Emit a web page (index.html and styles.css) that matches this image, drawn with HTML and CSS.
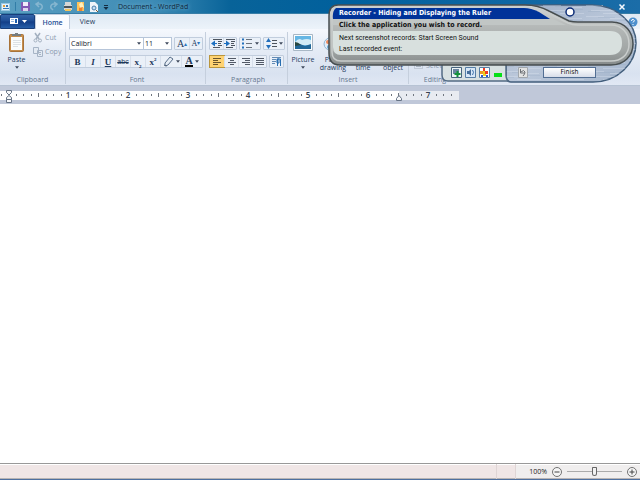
FILE: index.html
```html
<!DOCTYPE html>
<html lang="en">
<head>
<meta charset="utf-8">
<title>Document - WordPad</title>
<link rel="stylesheet" href="styles.css">
</head>
<body>
<svg class="defs" aria-hidden="true">
  <symbol id="arrow" viewBox="0 0 5 3"><path d="M0 0h5L2.500 3z" fill="#3f4a5c"/></symbol>
  <symbol id="outdent" viewBox="0 0 12 12"><path d="M2 1.500h9M7 3.500h4M7 5.500h3M7 7.500h4M2 9.500h7" stroke="#4d5560"/><path d="M4 2.500v6L0 5.500z" fill="#1c6fc0"/><path d="M3 5.500h3" stroke="#1c6fc0"/></symbol>
  <symbol id="indent" viewBox="0 0 12 12"><path d="M2 1.500h9M7 3.500h4M7 5.500h3M7 7.500h4M2 9.500h7" stroke="#4d5560"/><path d="M2 2.500v6l4-3z" fill="#1c6fc0"/><path d="M0 5.500h3" stroke="#1c6fc0"/></symbol>
</svg>

<header class="titlebar">
  <svg class="quick" width="112" height="14" viewBox="0 0 112 14" aria-hidden="true">
    <rect x="1.500" y="3.500" width="8" height="7" fill="#e6f2fa" stroke="#9bc8e2"/><path d="M3 5h2v2H3z" fill="#e0a040"/><path d="M6 5h2v2H6z" fill="#3478b8"/><path d="M3 8.500h6" stroke="#3478b8"/>
    <path d="M15.500 2v9" stroke="#327da7"/>
    <rect x="21" y="2" width="9" height="9" rx="1" fill="#8158b4"/><path d="M23 2h5v4h-5z" fill="#f1eafa"/><path d="M23 8h5v3h-5z" fill="#ddd4ed"/>
    <path d="M37 4h3q3 1 2 4l-2 2M39 2l-3 2 3 3" fill="none" stroke="#86b6d0" stroke-width="1.500"/>
    <path d="M56 4h-3q-3 1-2 4l2 2M54 2l3 2-3 3" fill="none" stroke="#86b6d0" stroke-width="1.500"/>
    <path d="M65 2h6v3h-6zM64 5h8v5h-8z" fill="#d5d6d5"/><path d="M64 6h8v2h-8z" fill="#4b555b"/><path d="M65 9h6v2h-6z" fill="#f5c65b"/>
    <path d="M77 2h7v9h-7z" fill="#ffc258"/><path d="M79 4l3-2 2 5-3 4" fill="#fff0bc"/><path d="M79 8l4-1-1 4h-3z" fill="#ef822d"/>
    <path d="M90 2h5l3 3v7h-8z" fill="#f0f5fa"/><circle cx="94" cy="8" r="2" fill="#c7e1f5" stroke="#4c7fab"/><path d="M96 10l2 2" stroke="#775832"/>
    <path d="M104 5.500h4" stroke="#142c42"/><path d="M103.500 7h5l-2.500 3z" fill="#142c42"/>
  </svg>
  <h1>Document - WordPad</h1>
  <div class="window-controls">
    <button type="button" aria-label="Minimize"><svg width="8" height="8"><path d="M1 3h6" stroke="#e5f3fc" stroke-width="2"/></svg></button>
    <button type="button" aria-label="Close"><svg width="8" height="8"><path d="M1.500 1.500l5 5m0-5l-5 5" stroke="#f4f9ff" stroke-width="1.500"/></svg></button>
  </div>
</header>

<nav class="tabs">
  <button class="app-menu" type="button" aria-label="WordPad menu"><svg width="22" height="9"><path d="M3 1h8v6H3z" fill="#fff"/><path d="M4 2.500h3M4 4.500h3" stroke="#91b4df"/><path d="M8 2h2v4H8z" fill="#1e5eae"/><path d="M15 3h5l-2.500 3z" fill="#fff"/></svg></button>
  <a class="tab active" href="#home">Home</a>
  <a class="tab" href="#view">View</a>
  <button class="help" type="button" aria-label="Help"><svg width="10" height="10"><circle cx="5" cy="5" r="4.500" fill="#4d90ce"/><path d="M3.500 4q0-2 2-1.500 2 1-.5 3M5 7v1" fill="none" stroke="#fff"/></svg></button>
</nav>

<main>
<section class="ribbon" id="home" aria-label="Home ribbon">
  <section class="group clipboard">
    <div class="tools">
      <button class="large" type="button"><svg width="18" height="22" viewBox="0 0 18 22"><rect x="1.500" y="2.500" width="14" height="17" rx="1" fill="#c58d4d" stroke="#a87339"/><path d="M3 5h11v13H3z" fill="#fafcfc"/><path d="M5 8.500h8M5 10.500h8M5 12.500h8M5 14.500h5" stroke="#dce1e5"/><path d="M4 4V2h3V1h3v1h3v2z" fill="#767d80"/></svg><span>Paste</span><svg class="arrow"><use href="#arrow"/></svg></button>
      <div class="stack">
        <button type="button" disabled><svg width="10" height="11"><path d="M2 1l4 6M7 1L3 7" stroke="#a3b0c0" stroke-width="1.500"/><circle cx="2.500" cy="8.500" r="1.500" fill="none" stroke="#a3b0c0"/><circle cx="7" cy="8.500" r="1.500" fill="none" stroke="#a3b0c0"/></svg>Cut</button>
        <button type="button" disabled><svg width="10" height="11"><path d="M.5 1.500h5v6h-5zM4.500 4.500h5v6h-5z" fill="#e3eaf3" stroke="#a6b4c6"/><path d="M6 6.500h2M6 8.500h2" stroke="#a6b4c6"/></svg>Copy</button>
      </div>
    </div>
    <h2>Clipboard</h2>
  </section>
  <section class="group font">
    <div class="rows">
      <div class="row">
        <div class="combos">
          <label class="combo family"><select aria-label="Font family"><option>Calibri</option></select><svg class="arrow"><use href="#arrow"/></svg></label>
          <label class="combo size"><select aria-label="Font size"><option>11</option></select><svg class="arrow"><use href="#arrow"/></svg></label>
        </div>
        <div class="strip"><button type="button" class="wide-letter">A<sup>▴</sup></button><button type="button" class="small-letter">A<sup>▾</sup></button></div>
      </div>
      <div class="row">
        <div class="strip format">
          <button type="button"><b>B</b></button><button type="button"><i>I</i></button><button type="button"><u>U</u></button><button type="button" class="strike"><s>abc</s></button><button type="button"><span>x<sub>2</sub></span></button><button type="button"><span>x<sup>2</sup></span></button>
          <button type="button" class="dual" aria-label="Highlight"><svg width="11" height="11"><path d="M2 7l5-6 3 2-5 6-3 1z" fill="#e6edf5" stroke="#596e89"/><path d="M1 9l3 1" stroke="#56677d"/></svg><svg class="arrow"><use href="#arrow"/></svg></button>
          <button type="button" class="dual color"><b>A</b><svg class="arrow"><use href="#arrow"/></svg></button>
        </div>
      </div>
    </div>
    <h2>Font</h2>
  </section>
  <section class="group paragraph">
    <div class="rows">
      <div class="row">
        <div class="strip"><button type="button" aria-label="Decrease indent"><svg width="12" height="12"><use href="#outdent"/></svg></button><button type="button" aria-label="Increase indent"><svg width="12" height="12"><use href="#indent"/></svg></button></div>
        <div class="strip"><button class="dual" type="button" aria-label="List"><svg width="11" height="11"><path d="M4 1.500h6M4 5.500h6M4 9.500h6" stroke="#68727e"/><path d="M0 1.500h2M0 5.500h2M0 9.500h2" stroke="#2371bd" stroke-width="2"/></svg><svg class="arrow"><use href="#arrow"/></svg></button></div>
        <div class="strip"><button class="dual" type="button" aria-label="Line spacing"><svg width="11" height="12"><path d="M6 2.500h5M6 5.500h5M6 8.500h5" stroke="#4b535d"/><path d="M2.500 0l2.500 4H0zM2.500 11L0 7h5z" fill="#246fbc"/></svg><svg class="arrow"><use href="#arrow"/></svg></button></div>
      </div>
      <div class="row">
        <div class="strip align">
          <button class="selected" type="button" aria-label="Align left"><svg width="10" height="10"><path d="M1 1.500h8M1 3.500h5M1 5.500h8M1 7.500h5" stroke="#69552d"/></svg></button>
          <button type="button" aria-label="Center"><svg width="10" height="10"><path d="M1 1.500h8M3 3.500h4M1 5.500h8M3 7.500h4" stroke="#515966"/></svg></button>
          <button type="button" aria-label="Align right"><svg width="10" height="10"><path d="M1 1.500h8M4 3.500h5M1 5.500h8M4 7.500h5" stroke="#515966"/></svg></button>
          <button type="button" aria-label="Justify"><svg width="10" height="10"><path d="M1 1.500h8M1 3.500h8M1 5.500h8M1 7.500h8" stroke="#515966"/></svg></button>
        </div>
        <div class="strip"><button type="button" aria-label="Paragraph"><svg width="12" height="11"><path d="M1 1.500h9M1 3.500h4M1 5.500h4M1 7.500h3" stroke="#638bb5"/><path d="M6.500 10V3h3v7M6 3h2v4H6z" fill="none" stroke="#286eb0"/></svg></button></div>
      </div>
    </div>
    <h2>Paragraph</h2>
  </section>
  <section class="group insert">
    <div class="tools">
      <button class="large" type="button"><svg width="20" height="22" viewBox="0 0 20 22"><path d="M.5 2.500h19v16H.5z" fill="#fbfdfe" stroke="#a8b7c5"/><path d="M2 4h16v13H2z" fill="#66b6e4"/><path d="M2 10q4-5 7-2 5-2 9 0v5H2z" fill="#d2ebf6"/><path d="M2 11l5 1 5 2 6-2v5H2z" fill="#216798"/><path d="M2 10q3 0 6 3l-6 1z" fill="#28473f"/></svg><span>Picture</span><svg class="arrow"><use href="#arrow"/></svg></button>
      <button class="large" type="button"><svg width="20" height="22" viewBox="0 0 20 22"><ellipse cx="10" cy="12" rx="9" ry="7" fill="#e3edf8" stroke="#91b6d5"/><circle cx="5" cy="10" r="2" fill="#ef8a5d"/><circle cx="6" cy="15" r="2" fill="#62a9d9"/><circle cx="10" cy="7" r="2" fill="#75b969"/></svg><span>Paint<br>drawing</span></button>
      <button class="large" type="button"><span class="picture-space"></span><span>Date and<br>time</span></button>
      <button class="large" type="button"><span class="picture-space"></span><span>Insert<br>object</span></button>
    </div>
    <h2>Insert</h2>
  </section>
  <section class="group editing">
    <div class="stack bottom"><button type="button" disabled><svg width="10" height="9"><path d="M.5 1.500h8v6h-8z" fill="none" stroke="#a6b1be" stroke-dasharray="1 1"/><path d="M2 3.500h5M2 5.500h5" stroke="#a6b1be"/></svg>Select all</button></div>
    <h2>Editing</h2>
  </section>
</section>

<section class="ruler" aria-label="Ruler">
  <svg width="459" height="18" viewBox="0 0 459 18">
    <defs><pattern id="inch" x="8" y="0" width="60" height="18" patternUnits="userSpaceOnUse"><path d="M8 9h1M15 9h1M23 9h1M38 9h1M45 9h1M53 9h1" stroke="#70767f" stroke-width="2"/><path d="M30.500 7v4" stroke="#70767f"/></pattern></defs>
    <path d="M0 5h459v9H0z" fill="#fff"/><path d="M399 5h60v9h-60z" fill="#e8ebf1"/><path d="M0 5h455v9H0z" fill="url(#inch)"/>
    <g class="numbers"><text x="68" y="12">1</text><text x="128" y="12">2</text><text x="188" y="12">3</text><text x="248" y="12">4</text><text x="308" y="12">5</text><text x="368" y="12">6</text><text x="428" y="12">7</text></g>
    <path d="M6.500 4.500h5v2L9 9l-2.500-2.500zM9 9.500l2.500 2v2h-5v-2zM6.500 13.500h5v3h-5zM399 9.500l2.500 3v2h-5v-2z" fill="#f7f8fa" stroke="#667385"/>
  </svg>
</section>
<section class="document" aria-label="Document" contenteditable="true"></section>
</main>

<footer>
  <div class="status-space"></div><div class="status-cell"></div>
  <div class="zoom"><label for="zoom">100%</label><button type="button" aria-label="Zoom out"><svg width="10" height="10"><circle cx="5" cy="5" r="4.500" fill="#f5f5f5" stroke="#727272"/><path d="M2.500 5h5" stroke="#444"/></svg></button><input id="zoom" type="range" min="0" max="100" value="50"><button type="button" aria-label="Zoom in"><svg width="10" height="10"><circle cx="5" cy="5" r="4.500" fill="#f5f5f5" stroke="#727272"/><path d="M2.500 5h5M5 2.500v5" stroke="#444"/></svg></button></div>
</footer>

<aside class="recorder" aria-label="Recorder">
  <svg class="shell" width="310" height="80" viewBox="0 0 310 80" aria-hidden="true">
    <defs>
      <linearGradient id="metal" x1="0" y1="0" x2="1" y2="1"><stop stop-color="#9dadc4"/><stop offset=".5" stop-color="#bac7da"/><stop offset="1" stop-color="#a5b6cd"/></linearGradient>
      <linearGradient id="rim" x1="0" y1="0" x2="0" y2="1"><stop stop-color="#d5d8d8"/><stop offset=".35" stop-color="#b5b9b8"/><stop offset=".75" stop-color="#a1a6a5"/><stop offset="1" stop-color="#858a8a"/></linearGradient>
      <pattern id="brushed" width="43" height="11" patternUnits="userSpaceOnUse"><path d="M0 1.500h18M24 3.500h15M5 6.500h25M17 9.500h24" stroke="#e3ebf5" opacity=".3"/><path d="M12 2.500h17M2 7.500h12M24 5.500h16" stroke="#7990af" opacity=".15"/></pattern>
    </defs>
    <path d="M190 1h74c24 0 44 18 44 38s-18 39-43 39h-82q-5 0-5-6V45z" fill="url(#metal)" stroke="#425e7c" stroke-width="1.500"/>
    <path d="M190 1h74c24 0 44 18 44 38s-18 39-43 39h-82q-5 0-5-6V45z" fill="url(#brushed)"/>
    <path d="M114 58v13q0 6 6 6h61q-3-1-3-6V58z" fill="#d8e1e2" stroke="#536b84" stroke-width="1.500"/>
    <path d="M10 1h187q13 0 24 6l20 10q4 1 9 1h34c13 0 21 10 21 22s-9 21-22 21H12Q1 61 1 49V12Q1 1 10 1z" fill="url(#rim)" stroke="#474e50" stroke-width="1.500"/>
    <path d="M9 3h188q12 0 23 6l20 10q4 2 10 2h33c11 0 18 8 18 19s-8 17-18 17H13Q4 57 4 48V12Q4 3 9 3z" fill="none" stroke="#c9cdcc" stroke-width="1.500"/>
    <path d="M8 4h188q7 0 15 4l11 7H5q-1-8 3-11z" fill="#003399"/>
    <path d="M5 15h220l13 6H5z" fill="#c1c6c5"/>
    <path d="M5 27h277q12 0 12 12t-12 12H13q-8 0-8-8z" fill="#d8e0de"/>
    <circle cx="242" cy="8" r="4" fill="#fff" stroke="#0b2b76" stroke-width="1.500"/>
  </svg>
  <div class="recorder-text">
    <h2>Recorder - Hiding and Displaying the Ruler</h2>
    <strong>Click the application you wish to record.</strong>
    <p>Next screenshot records: Start Screen Sound</p>
    <p>Last recorded event:</p>
  </div>
  <div class="recorder-tools">
    <button type="button" aria-label="Insert screenshot"><svg width="11" height="11"><path d="M.5.500h10v10H.5z" fill="#eef5f7" stroke="#46637d"/><path d="M2 2h6v5H2z" fill="#6b85a1"/><path d="M6.500 4v6M3.500 7h6" stroke="#15923b" stroke-width="2"/></svg></button>
    <button type="button" aria-label="Sound"><svg width="11" height="11"><path d="M.5.500h10v10H.5z" fill="#d7e7f7" stroke="#557da5"/><path d="M2 4h2l2-2v7L4 7H2z" fill="#466f9b"/><path d="M7.500 3q2 2 0 5" fill="none" stroke="#3d72aa"/></svg></button>
    <button type="button" aria-label="Actions"><svg width="11" height="11"><path d="M.5.500h10v10H.5z" fill="#fff" stroke="#557da5"/><path d="M4 1h2v3H4z" fill="#f03c24"/><path d="M1 4h3v3H1z" fill="#ed9b24"/><path d="M6 4h3v3H6z" fill="#f03c24"/><path d="M4 4h2v3H4z" fill="#edcf22"/><path d="M2 8h2v2H2zM7 8h2v2H7z" fill="#2c57d0"/><path d="M4 7h3v2H4z" fill="#edcf22"/></svg></button>
    <span class="level"></span>
    <button class="undo" type="button" aria-label="Undo"><svg width="10" height="11"><path d="M.5.500h9v10h-9z" fill="#e2e3e3" stroke="#a1a7ac"/><path d="M2.500 2v4h4M3 5q3-3 4 0 0 2-2 4" fill="none" stroke="#6c7074"/></svg></button>
    <button class="finish" type="button">Finish</button>
  </div>
</aside>
</body>
</html>
```
FILE: styles.css
```css
* { box-sizing: border-box; }
body {
  margin: 0;
  min-height: 100vh;
  display: flex;
  flex-direction: column;
  position: relative;
  overflow: hidden;
  font: 7px/9px "Open Sans", "Noto Sans", sans-serif;
  color: #1e395b;
  background: #fff;
}
h1, h2, p { margin: 0; font: inherit; }
button { padding: 0; border: 0; background: none; color: inherit; font: inherit; }
svg { display: block; flex: none; }
.defs { position: absolute; width: 0; height: 0; }
.arrow { width: 4px; height: 3px; }
.titlebar {
  height: 14px;
  display: flex;
  align-items: center;
  background: linear-gradient(90deg, #5b9fc1, #3d8bb5 24%, #086399 36%, #00609d 55%, #1b6da8);
  border-bottom: 1px solid #377da6;
}
.quick { margin-right: 6px; }
.titlebar h1 { color: #10283c; white-space: nowrap; text-shadow: 0 0 4px #8fc0da; }
.window-controls { display: flex; gap: 14px; margin-left: auto; padding-right: 14px; }
.tabs { height: 15px; display: flex; align-items: stretch; background: linear-gradient(#dfe9f3, #ecf3fa); }
.app-menu { width: 35px; display: grid; place-items: center; background: linear-gradient(#3464a8, #1c4b93 48%, #123d86 52%, #265fa9); border: 1px solid #173e7b; border-radius: 2px 2px 0 0; }
.tab { width: 35px; display: grid; place-items: center; color: #1e395b; text-decoration: none; }
.tab.active { background: #fafcff; border: 1px solid #c2cede; border-bottom: 0; border-radius: 2px 2px 0 0; color: #1d4e94; font-weight: 600; }
.help { margin-left: auto; padding-right: 2px; }
main { flex: 1; display: flex; flex-direction: column; }
.ribbon { height: 57px; display: flex; background: linear-gradient(#f5f8fd, #e5ecf6 35%, #d9e2f0 80%, #e1e8f4); border-bottom: 1px solid #b7c3d4; }
.group { height: 52px; margin-top: 3px; display: flex; flex-direction: column; justify-content: space-between; border-right: 1px solid #c5cfdd; }
.group h2 { text-align: center; color: #667890; }
.tools { display: flex; }
.clipboard { width: 66px; }
.font { width: 140px; padding-left: 3px; }
.paragraph { width: 82px; padding-left: 3px; }
.insert { width: 121px; }
.insert .tools { justify-content: space-around; }
.editing { width: 52px; border: 0; }
.large { width: 30px; display: flex; flex-direction: column; align-items: center; line-height: 8px; }
.clipboard .large { width: 33px; }
.large span { white-space: nowrap; }
.large .arrow { margin-top: 2px; }
.large > svg:first-child { margin-bottom: 2px; }
.picture-space { height: 24px; }
.stack { display: flex; flex-direction: column; gap: 3px; }
.stack button { display: flex; align-items: center; gap: 2px; color: #8c9aae; white-space: nowrap; }
.stack.bottom { padding: 29px 0 0 5px; }
.rows { display: flex; flex-direction: column; gap: 5px; padding-top: 5px; }
.row { display: flex; gap: 2px; }
.combos { display: flex; }
.combo { height: 13px; display: flex; align-items: center; background: #fff; border: 1px solid #b6c5d9; padding-right: 2px; }
.combo select { flex: 1; min-width: 0; appearance: none; border: 0; padding: 0 1px; background: transparent; color: #10182a; font: inherit; }
.family { width: 75px; }
.size { width: 28px; border-left: 0; }
.strip { height: 13px; display: flex; border: 1px solid #c1cddd; border-radius: 1px; background: #eaf0f8; }
.strip button { width: 13px; display: flex; align-items: center; justify-content: center; }
.strip button + button { border-left: 1px solid #d7dfeb; }
.strip .dual { width: 20px; gap: 2px; }
.format button { width: 15px; font: bold 9px/10px "Liberation Serif", serif; }
.format .dual { width: 21px; }
.format .strike { font: 7px/9px "Liberation Sans", sans-serif; }
.format sub, .format sup { font-size: 5px; line-height: 0; }
.format .color b { height: 10px; border-bottom: 2px solid #000; font-size: 10px; line-height: 8px; }
.strip .wide-letter { width: 14px; font: 10px/10px "Liberation Serif", serif; }
.strip .small-letter { font: 8px/9px "Liberation Serif", serif; }
.wide-letter sup, .small-letter sup { font-size: 6px; color: #2975bd; }
.align button { width: 14px; }
.align .selected { background: #ffd372; outline: 1px solid #ba963d; }
.ruler { height: 18px; background: #c0c8d9; }
.numbers { font: 600 8px "Open Sans", sans-serif; fill: #37414f; text-anchor: middle; }
.document { flex: 1; background: #fff; outline: 0; }
footer { height: 17px; display: flex; background: #f0e6e6; border-top: 1px solid #999; border-bottom: 1px solid #4e70a0; box-shadow: inset 0 1px #fff, inset 0 -1px #b8b4b4; }
.status-space { flex: 1; }
.status-cell { width: 20px; border: solid #dfd5d5; border-width: 0 1px; }
.zoom { width: 124px; margin: 1px 0; display: flex; align-items: center; justify-content: flex-end; gap: 5px; padding-right: 3px; background: #f0eeee; color: #222; }
.zoom input { width: 55px; height: 12px; margin: 0; appearance: none; background: linear-gradient(#aaa, #aaa) center / 100% 1px no-repeat; }
.zoom input::-webkit-slider-thumb { appearance: none; width: 5px; height: 9px; background: #f2f2f2; border: 1px solid #666; border-radius: 1px 1px 3px 3px; }
.recorder { position: absolute; right: 2px; top: 4px; width: 310px; height: 80px; color: #111; font: 7px/10px "DejaVu Sans Condensed", "DejaVu Sans", sans-serif; }
.shell { position: absolute; inset: 0; }
.recorder-text { position: relative; height: 62px; padding: 4px 0 0 11px; white-space: nowrap; }
.recorder-text h2 { font-weight: bold; color: #fff; }
.recorder-text strong { display: block; margin: 2px 0 4px; }
.recorder-text p { margin-bottom: 2px; line-height: 9px; font-family: Roboto, sans-serif; }
.recorder-tools { position: relative; height: 13px; padding-left: 123px; display: flex; align-items: center; gap: 3px; }
.level { width: 8px; height: 4px; margin: 5px 0 0 1px; background: #06df18; }
.undo { margin-left: 13px; }
.finish { width: 53px; height: 11px; margin-left: 12px; border: 1px solid #526e93; background: linear-gradient(#fff, #d7dde9); line-height: 9px; }
```
